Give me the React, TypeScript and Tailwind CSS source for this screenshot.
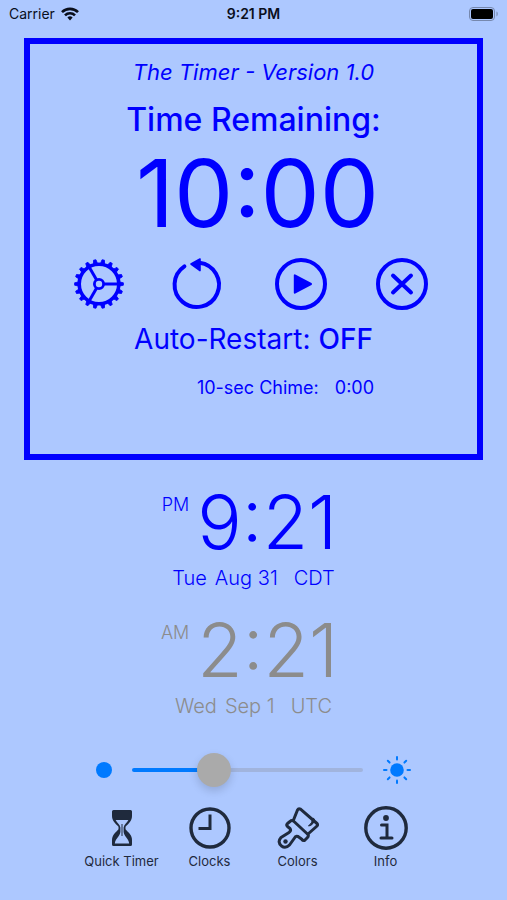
import React, { useState } from 'react';

const GEAR_TEETH = Array.from({ length: 18 }, (_, i) => i * 20);
const SUN_RAYS = Array.from({ length: 8 }, (_, i) => i * 45);

function WifiIcon() {
  return (
    <svg viewBox="0 0 18 14" className="h-[14px] w-[18px]" fill="none" stroke="#0a0f1c" strokeWidth="2.6" aria-hidden="true">
      <path d="M1 5.2a11.3 11.3 0 0 1 16 0" />
      <path d="M4 8.4a7 7 0 0 1 10 0" />
      <path d="M6.4 10.4a3.9 3.9 0 0 1 5.2 0L9 13.4z" fill="#0a0f1c" stroke="none" />
    </svg>
  );
}

function BatteryIcon() {
  return (
    <svg viewBox="0 0 30 14" className="h-[14px] w-[30px]" aria-hidden="true">
      <rect x="0.5" y="0.5" width="25" height="13" rx="3.5" fill="none" stroke="#7688ae" />
      <rect x="2" y="2" width="22" height="10" rx="2" fill="#000" />
      <path d="M27.5 4.6c1.6.4 1.6 4.4 0 4.8z" fill="#7688ae" />
    </svg>
  );
}

function GearIcon() {
  return (
    <svg viewBox="-1 -1 52 52" className="size-[52px]" fill="none" stroke="currentColor" aria-hidden="true">
      <circle cx="25" cy="25" r="19.8" strokeWidth="3.6" />
      <circle cx="25" cy="25" r="4.6" strokeWidth="2.8" />
      {[0, 120, 240].map((deg) => (
        <path key={deg} d="M30 25h15" strokeWidth="3" transform={`rotate(${deg} 25 25)`} />
      ))}
      {GEAR_TEETH.map((deg) => (
        <path key={deg} d="M45 22.8l4.4 1v2.4l-4.4 1z" fill="currentColor" strokeWidth="0.8" strokeLinejoin="round" transform={`rotate(${deg} 25 25)`} />
      ))}
    </svg>
  );
}

function RestartIcon() {
  return (
    <svg viewBox="2 0 52 52" className="size-[52px] overflow-visible" fill="none" stroke="currentColor" aria-hidden="true">
      <path d="M27.5 4.8A22.2 22.2 0 1 1 12.4 8.4" strokeWidth="4" strokeLinecap="round" />
      <path d="M19 6l9-5v11.6z" fill="currentColor" strokeWidth="1.6" strokeLinejoin="round" />
    </svg>
  );
}

function PlayIcon() {
  return (
    <svg viewBox="0 0 52 52" className="size-[52px]" fill="none" stroke="currentColor" aria-hidden="true">
      <circle cx="26" cy="26" r="24" strokeWidth="4" />
      <path d="M19.8 17.3v17.4L36 26z" fill="currentColor" strokeWidth="2" strokeLinejoin="round" />
    </svg>
  );
}

function CancelIcon() {
  return (
    <svg viewBox="0 0 52 52" className="size-[52px]" fill="none" stroke="currentColor" strokeWidth="4" aria-hidden="true">
      <circle cx="26" cy="26" r="24" />
      <path d="M17 17.5l18 17M35 17.5l-18 17" strokeLinecap="round" />
    </svg>
  );
}

function HourglassIcon() {
  return (
    <svg viewBox="0 0 20 36" className="h-9 w-5" fill="currentColor" aria-hidden="true">
      <path d="M1.5 0h17A1.5 1.5 0 0 1 20 1.5V6c0 5-3.5 7.5-6.5 10.800v2.400C16.5 22.5 20 25 20 30v4.500a1.500 1.500 0 0 1-1.500 1.500h-17A1.500 1.500 0 0 1 0 34.500V30c0-5 3.500-7.500 6.500-10.800v-2.400C3.500 13.500 0 11 0 6V1.500A1.500 1.500 0 0 1 1.500 0z" />
      <path d="M3.600 10h12.800c-1.500 3-4.400 4.800-4.800 7.400V22c.6 4.500 4.800 6 5.600 11.500H2.800C3.600 28 7.800 26.500 8.400 22v-4.600C8 14.800 5.100 13 3.600 10z" fill="#adc8ff" />
      <path d="M10 14v12" stroke="currentColor" strokeWidth="1" />
    </svg>
  );
}

function ClockIcon() {
  return (
    <svg viewBox="0 0 42 42" className="size-[42px]" fill="none" stroke="currentColor" aria-hidden="true">
      <circle cx="21" cy="21" r="19" strokeWidth="3.4" />
      <path d="M21 7.5V21.5H9.5" strokeWidth="3" />
    </svg>
  );
}

function BrushIcon() {
  return (
    <svg viewBox="0 0 42 42" className="size-[42px]" fill="none" stroke="currentColor" strokeWidth="3" strokeLinejoin="round" strokeLinecap="round" aria-hidden="true">
      <path d="M16.500 13L20.500 3Q21.500 1.200 23.500 2.200L40 16.500Q41.200 18 39.500 19.500L31 27" />
      <path d="M37.500 12.500Q36.500 18.500 31.500 19Q35 16.500 36 11.500z" fill="currentColor" strokeWidth="1" />
      <path d="M13 14.500Q15 12.500 17 14.500L31 27.500Q32 29.500 30 31L27.500 33.500Q26 34 24.500 32L21 29.500Q18.500 28.500 17.500 31L12.500 38Q8.500 42 4.500 39 0 35 4 30.500L12 25.500Q14.500 24 13 21.500L10.500 19.500Q9 18 10.500 16.500z" />
      <circle cx="8.500" cy="34.500" r="2.200" fill="currentColor" stroke="none" />
    </svg>
  );
}

function InfoIcon() {
  return (
    <svg viewBox="0 0 44 44" className="size-11" fill="none" stroke="currentColor" aria-hidden="true">
      <circle cx="22" cy="22" r="20.2" strokeWidth="3.4" />
      <circle cx="22" cy="12" r="2.9" fill="currentColor" stroke="none" />
      <path d="M17.5 19h5.5v13M17 32h11" strokeWidth="3" strokeLinecap="round" />
    </svg>
  );
}

function SunIcon() {
  return (
    <svg viewBox="0 0 28 28" className="size-7" aria-hidden="true">
      <circle cx="14" cy="14" r="6.8" fill="#007aff" />
      {SUN_RAYS.map((deg) => (
        <path key={deg} d="M24.5 14h2.5" stroke="#007aff" strokeWidth="2" strokeLinecap="round" transform={`rotate(${deg} 14 14)`} />
      ))}
    </svg>
  );
}

interface WorldClockProps {
  period: string;
  time: string;
  day: string;
  date: string;
  zone: string;
  colorClass: string;
}

function WorldClock({ period, time, day, date, zone, colorClass }: WorldClockProps) {
  return (
    <section className={`flex flex-col items-center font-light ${colorClass}`}>
      <div className="flex items-start gap-2 pr-2">
        <span className="pt-2 text-[18px] leading-[26px]">{period}</span>
        <span className="text-[74px] leading-[76px]">{time}</span>
      </div>
      <div className="mt-0.5 flex text-[20px] leading-8">
        <span>{day}</span>
        <span className="ml-2">{date}</span>
        <span className="ml-4">{zone}</span>
      </div>
    </section>
  );
}

const TOOLBAR = [
  { label: 'Quick Timer', icon: <HourglassIcon /> },
  { label: 'Clocks', icon: <ClockIcon /> },
  { label: 'Colors', icon: <BrushIcon /> },
  { label: 'Info', icon: <InfoIcon /> },
];

export default function App() {
  const [brightness, setBrightness] = useState(33);
  const [autoRestart, setAutoRestart] = useState(false);

  return (
    <div className="min-h-screen bg-[#adc8ff] font-['Inter',sans-serif]">
      {/* Status bar */}
      <header className="grid h-[38px] grid-cols-3 items-start px-2 pt-1 text-[14px] leading-5 text-[#0a0f1c]">
        <div className="flex items-center gap-1.5 pl-px">
          <span>Carrier</span>
          <WifiIcon />
        </div>
        <span className="text-center font-semibold">9:21 PM</span>
        <div className="flex h-5 items-center justify-end">
          <BatteryIcon />
        </div>
      </header>

      {/* Timer */}
      <main>
        <section className="mx-6 flex flex-col items-center border-6 border-[#0000ff] pt-3 pb-[50px] text-[#0000ff]">
          <h1 className="text-[22px] leading-8 italic">The Timer - Version 1.0</h1>
          <h2 className="mt-3 text-[32px] leading-10 font-medium">Time Remaining:</h2>
          <div className="mt-1 pl-2 text-[94px] leading-[98px]">10:00</div>

          <div className="mt-4 flex items-center gap-[49px] pr-1.5">
            <button type="button" aria-label="Settings"><GearIcon /></button>
            <button type="button" aria-label="Restart"><RestartIcon /></button>
            <button type="button" aria-label="Start"><PlayIcon /></button>
            <button type="button" aria-label="Cancel"><CancelIcon /></button>
          </div>

          <div className="mt-2 flex gap-2 text-[28px] leading-[42px]">
            <span>Auto-Restart:</span>
            <button type="button" className="font-medium" onClick={() => setAutoRestart(!autoRestart)}>
              {autoRestart ? 'ON' : 'OFF'}
            </button>
          </div>
          <div className="mt-3 flex gap-4 pl-16 text-[18px] leading-8">
            <span>10-sec Chime:</span>
            <span>0:00</span>
          </div>
        </section>

        <div className="mt-6 flex flex-col gap-[18px]">
          <WorldClock period="PM" time="9:21" day="Tue" date="Aug 31" zone="CDT" colorClass="text-[#0000ff]" />
          <WorldClock period="AM" time="2:21" day="Wed" date="Sep 1" zone="UTC" colorClass="text-[#8c8c8c]" />
        </div>

        {/* Brightness */}
        <div className="mx-24 mt-[30px] flex h-9 items-center">
          <span className="size-4 shrink-0 rounded-full bg-[#007aff]" />
          <input
            type="range"
            min={0}
            max={100}
            value={brightness}
            onChange={(e) => setBrightness(Number(e.target.value))}
            aria-label="Brightness"
            className="mx-5 h-1 min-w-0 flex-1 appearance-none rounded-full [&::-webkit-slider-thumb]:size-[34px] [&::-webkit-slider-thumb]:appearance-none [&::-webkit-slider-thumb]:rounded-full [&::-webkit-slider-thumb]:bg-[#aaaaaa] [&::-webkit-slider-thumb]:shadow-[0_4px_8px_rgba(0,0,0,0.15)]"
            style={{ background: `linear-gradient(to right, #007aff ${brightness}%, #a1b4dd ${brightness}%)` }}
          />
          <SunIcon />
        </div>
      </main>

      {/* Toolbar */}
      <nav className="mt-[18px] flex justify-center text-[13px] leading-5 text-[#1f2a3d]">
        {TOOLBAR.map(({ label, icon }) => (
          <button key={label} type="button" className="flex w-[88px] flex-col items-center">
            <span className="flex h-11 items-center">{icon}</span>
            <span className="mt-px">{label}</span>
          </button>
        ))}
      </nav>
    </div>
  );
}
